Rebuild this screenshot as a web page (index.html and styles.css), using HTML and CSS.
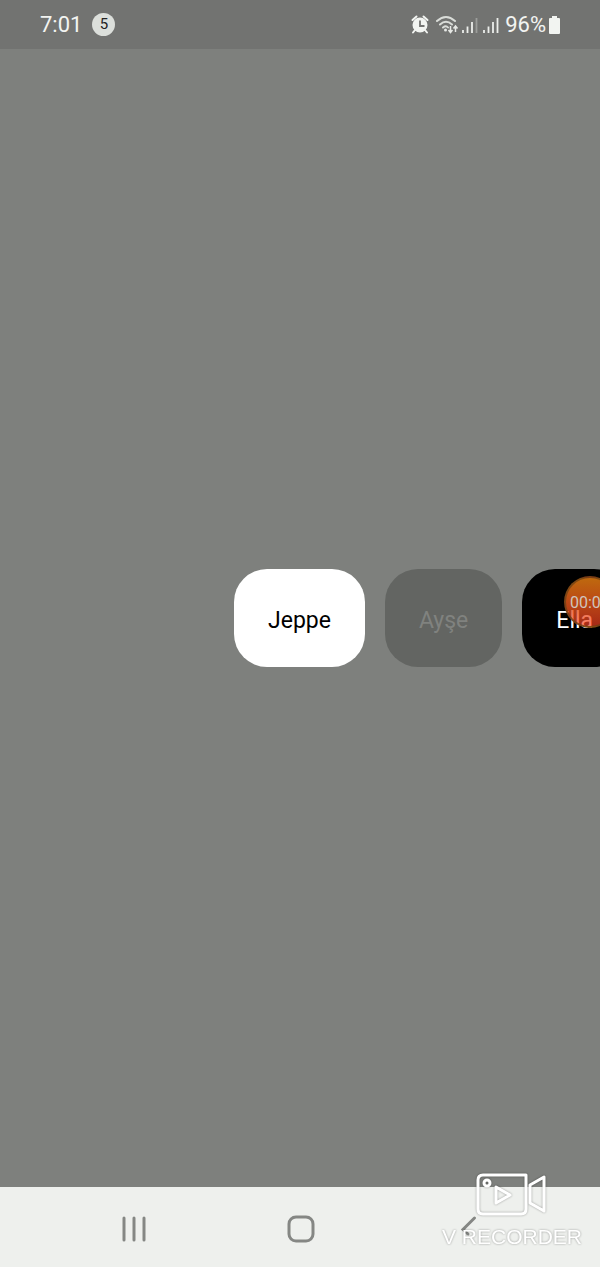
FILE: index.html
```html
<!DOCTYPE html>
<html lang="en">
<head>
<meta charset="utf-8">
<meta name="viewport" content="width=device-width, initial-scale=1">
<title>Names</title>
<link rel="stylesheet" href="styles.css">
</head>
<body>
<div class="screen">
  <header class="status">
    <span class="clock">7:01</span>
    <span class="count">5</span>
    <div class="indicators">
      <svg class="signals" width="90" height="24" viewBox="0 0 90 24" aria-hidden="true">
        <circle cx="10" cy="12" r="7.5" fill="#f2f4f1"/>
        <path d="M2.500 7l4-3.500M17.500 7l-4-3.500M5 17l-2 2.500M15 17l2 2.500" stroke="#f2f4f1" stroke-width="2" stroke-linecap="round"/>
        <path d="M10 7.500v5.500h4.500" fill="none" stroke="#737472" stroke-width="1.800"/>
        <g fill="none" stroke="#d9dcd8" stroke-width="2" stroke-linecap="round">
          <path d="M27 8q9-8 18 0M30 11.500q6-5.500 12 0M33 14.500q3-2.500 5 0"/>
        </g>
        <circle cx="35.500" cy="17" r="1.500" fill="#e6e8e5"/>
        <path d="M40.500 13v6M38.500 17l2 2.500 2-2.500M45.500 19v-6M43.500 15.500l2-2.500 2 2.500" fill="none" stroke="#e6e8e5" stroke-width="1.500"/>
        <path d="M53 17v3M57.500 13.500V20M62 9v11M74 17v3M78.500 13.500V20M83 9v11M87.500 5v15" stroke="#eceeeb" stroke-width="1.800"/>
        <path d="M66.500 5v15" stroke="#9b9d9a" stroke-width="1.800"/>
      </svg>
      <span class="percent">96%</span>
      <svg width="11" height="18" viewBox="0 0 11 18" aria-hidden="true"><path d="M3 0h5v2h2q1 0 1 1v14q0 1-1 1H1q-1 0-1-1V3q0-1 1-1h2z" fill="#f2f4f1"/></svg>
    </div>
  </header>
  <main class="stage">
    <div class="carousel">
      <button class="pill light">Jeppe</button>
      <button class="pill muted">Ayşe</button>
      <button class="pill dark">Ella</button>
    </div>
    <div class="timer">00:01</div>
  </main>
  <nav class="navbar">
    <button class="key" aria-label="Recents"><svg width="28" height="28" viewBox="0 0 28 28"><path d="M4 3v22M14 3v22M24 3v22" stroke="#858784" stroke-width="3" stroke-linecap="round"/></svg></button>
    <button class="key" aria-label="Home"><svg width="28" height="28" viewBox="0 0 28 28"><rect x="2" y="2" width="24" height="24" rx="7" fill="none" stroke="#858784" stroke-width="3"/></svg></button>
    <button class="key" aria-label="Back"><svg width="28" height="28" viewBox="0 0 28 28"><path d="M20.500 3L9 14.500l5 4.500" fill="none" stroke="#858784" stroke-width="3" stroke-linecap="round"/></svg></button>
  </nav>
  <div class="watermark">
    <svg width="72" height="44" viewBox="0 0 72 44" aria-hidden="true">
      <g fill="none" stroke="#fff" stroke-width="3" stroke-linejoin="round">
        <path d="M7 2h43v34q0 5-5 5H7q-5 0-5-5V7q0-5 5-5zM54 12l14-8v34l-14-8zM20 14v16l14-8z"/>
        <circle cx="11" cy="10" r="3"/>
      </g>
    </svg>
    <span>V RECORDER</span>
  </div>
</div>
</body>
</html>
```
FILE: styles.css
```css
* {
  box-sizing: border-box;
}

body {
  margin: 0;
  font-family: Roboto, sans-serif;
}

button {
  border: 0;
  font: inherit;
}

.screen {
  position: relative;
  display: flex;
  flex-direction: column;
  min-height: 100vh;
  overflow: hidden;
  background: #7e807d;
}

.status {
  display: flex;
  align-items: center;
  gap: 10px;
  height: 49px;
  padding: 0 40px;
  background: #727371;
  color: #f2f4f1;
  font-size: 22px;
}

.count {
  width: 23px;
  height: 23px;
  border-radius: 50%;
  background: #dcdfdb;
  color: #222;
  font-size: 15px;
  line-height: 23px;
  text-align: center;
}

.indicators {
  display: flex;
  align-items: center;
  gap: 3px;
  margin-left: auto;
}

.signals {
  margin-right: 2px;
}

.stage {
  position: relative;
  display: flex;
  flex: 1;
  align-items: center;
  overflow: hidden;
}

.carousel {
  display: flex;
  gap: 20px;
  padding-left: calc(50% - 66px);
}

.pill {
  flex: none;
  height: 98px;
  padding: 4px 34px 0;
  border-radius: 33px;
  font-size: 23px;
}

.light {
  background: #fff;
  color: #000;
}

.muted {
  background: #636562;
  color: #80827f;
}

.dark {
  background: #000;
  color: #fff;
}

.timer {
  position: absolute;
  top: calc(50% - 42px);
  right: -16px;
  width: 52px;
  height: 52px;
  border: 2px solid rgba(110, 65, 20, 0.8);
  border-radius: 50%;
  background: linear-gradient(rgba(201, 111, 15, 0.95), rgba(220, 85, 25, 0.85) 50%, rgba(255, 65, 35, 0.65));
  color: #d0c5bd;
  font-size: 16px;
  line-height: 50px;
  text-indent: 4px;
  white-space: nowrap;
}

.navbar {
  display: grid;
  grid-template-columns: repeat(3, 1fr);
  height: 80px;
  padding: 0 48px 0 50px;
  background: #eef0ed;
}

.key {
  display: flex;
  align-items: center;
  justify-content: center;
  padding: 4px 0 0;
  background: none;
}

.watermark {
  position: absolute;
  right: 18px;
  bottom: 17px;
  display: flex;
  flex-direction: column;
  align-items: center;
  gap: 7px;
  color: #fff;
  font-family: "Liberation Sans", Arial, sans-serif;
  font-size: 21px;
  line-height: 26px;
  filter: drop-shadow(0 0 1px rgba(0, 0, 0, 0.35));
  pointer-events: none;
}
```
